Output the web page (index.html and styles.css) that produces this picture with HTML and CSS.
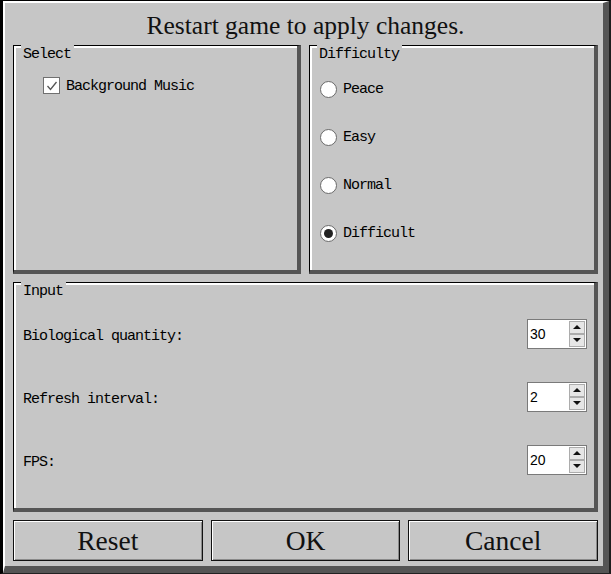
FILE: index.html
```html
<!DOCTYPE html>
<html>
<head>
<meta charset="utf-8">
<link rel="stylesheet" href="styles.css">
</head>
<body>
<div class="window">
  <div class="window-inner">
    <div class="title">Restart game to apply changes.</div>
    <div class="top-row">
      <div class="panel select-panel">
        <span class="panel-title">Select</span>
        <label class="check-row">
          <span class="checkbox">
            <svg width="14" height="14" viewBox="0 0 14 14"><polyline points="2.5,7 5.5,10.5 11.5,3" fill="none" stroke="#555" stroke-width="1.3"/></svg>
          </span>
          <span class="mono">Background Music</span>
        </label>
      </div>
      <div class="panel difficulty-panel">
        <span class="panel-title">Difficulty</span>
        <div class="radio-row"><span class="radio"></span><span class="mono">Peace</span></div>
        <div class="radio-row"><span class="radio"></span><span class="mono">Easy</span></div>
        <div class="radio-row"><span class="radio"></span><span class="mono">Normal</span></div>
        <div class="radio-row"><span class="radio checked"></span><span class="mono">Difficult</span></div>
      </div>
    </div>
    <div class="panel input-panel">
      <span class="panel-title">Input</span>
      <div class="input-row">
        <span class="mono row-label">Biological quantity:</span>
        <div class="spinner"><span class="spin-value">30</span><span class="spin-btns"><span class="spin-btn"><span class="tri-up"></span></span><span class="spin-btn"><span class="tri-down"></span></span></span></div>
      </div>
      <div class="input-row">
        <span class="mono row-label">Refresh interval:</span>
        <div class="spinner"><span class="spin-value">2</span><span class="spin-btns"><span class="spin-btn"><span class="tri-up"></span></span><span class="spin-btn"><span class="tri-down"></span></span></span></div>
      </div>
      <div class="input-row">
        <span class="mono row-label">FPS:</span>
        <div class="spinner"><span class="spin-value">20</span><span class="spin-btns"><span class="spin-btn"><span class="tri-up"></span></span><span class="spin-btn"><span class="tri-down"></span></span></span></div>
      </div>
    </div>
    <div class="button-row">
      <button class="btn">Reset</button>
      <button class="btn">OK</button>
      <button class="btn">Cancel</button>
    </div>
  </div>
</div>
</body>
</html>
```

FILE: styles.css
```css
html, body {
  margin: 0;
  padding: 0;
  background: #c6c6c6;
}
.window {
  width: 611px;
  height: 574px;
  box-sizing: border-box;
  border-style: solid;
  border-width: 1px 2px 1px 3px;
  border-color: #000 #1e1e1e #222 #000;
}
.window-inner {
  height: 100%;
  box-sizing: border-box;
  border-style: solid;
  border-width: 2px 6px 7px 2px;
  border-color: #fff #555 #555 #fff;
  padding: 0 5px 5px 8px;
  display: flex;
  flex-direction: column;
  gap: 8px;
  background: #c6c6c6;
}
.title {
  font-family: "Liberation Serif", serif;
  font-size: 25.5px;
  line-height: 40px;
  height: 42px;
  box-sizing: border-box;
  padding-top: 3px;
  text-align: center;
  color: #111;
  margin-bottom: -8px;
}
.top-row {
  display: grid;
  grid-template-columns: 288px 1fr;
  gap: 8px;
  height: 229px;
}
.panel {
  position: relative;
  box-sizing: border-box;
  border-style: solid;
  border-width: 1px 4px 4px 1px;
  border-color: #000 #555 #555 #000;
  box-shadow: inset 2px 2px 0 #fff;
}
.panel-title {
  position: absolute;
  top: -1px;
  left: 7px;
  padding: 2px 3px 0 2px;
  background: #c6c6c6;
  font-family: "Liberation Mono", monospace;
  font-size: 15px;
  letter-spacing: -1px;
  line-height: 16px;
  height: 16px;
  color: #000;
}
.mono {
  font-family: "Liberation Mono", monospace;
  font-size: 15px;
  letter-spacing: -1px;
  color: #000;
  white-space: pre;
}
.select-panel {
  padding: 31px 0 0 29px;
}
.check-row {
  display: flex;
  align-items: center;
  gap: 6px;
  height: 17px;
}
.checkbox {
  width: 17px;
  height: 17px;
  box-sizing: border-box;
  border: 1px solid #707070;
  background: #fff;
  display: flex;
  align-items: center;
  justify-content: center;
}
.check-row .mono {
  padding-top: 1px;
}
.difficulty-panel {
  padding: 19px 0 0 10px;
}
.radio-row {
  height: 48px;
  display: flex;
  align-items: center;
  gap: 6px;
}
.radio {
  width: 17px;
  height: 17px;
  box-sizing: border-box;
  border-radius: 50%;
  border: 1px solid #6a6a6a;
  background: #fff;
  display: flex;
  align-items: center;
  justify-content: center;
}
.radio.checked::after {
  content: "";
  width: 9px;
  height: 9px;
  border-radius: 50%;
  background: #222;
}
.input-panel {
  height: 230px;
  padding: 20px 7px 0 9px;
}
.input-row {
  height: 63px;
  display: flex;
  align-items: center;
  justify-content: space-between;
}
.row-label {
  padding-top: 3px;
}
.spinner {
  width: 60px;
  height: 30px;
  box-sizing: border-box;
  border: 1px solid #7a7a7a;
  background: #fff;
  display: flex;
  margin-top: -2px;
}
.spin-value {
  flex: 1;
  padding-left: 2px;
  font-family: "Liberation Sans", Arial, sans-serif;
  font-size: 14px;
  line-height: 28px;
  color: #000;
}
.spin-btns {
  width: 16px;
  display: flex;
  flex-direction: column;
  padding: 1px 1px 1px 0;
}
.spin-btn {
  flex: 1;
  box-sizing: border-box;
  border: 1px solid #acacac;
  background: #e6e6e6;
  display: flex;
  align-items: center;
  justify-content: center;
}
.tri-up {
  width: 0;
  height: 0;
  border-left: 4px solid transparent;
  border-right: 4px solid transparent;
  border-bottom: 4px solid #111;
}
.tri-down {
  width: 0;
  height: 0;
  border-left: 4px solid transparent;
  border-right: 4px solid transparent;
  border-top: 4px solid #111;
}
.button-row {
  display: grid;
  grid-template-columns: 1fr 1fr 1fr;
  gap: 8px;
  height: 41px;
}
.btn {
  margin: 0;
  padding: 0;
  height: 41px;
  box-sizing: border-box;
  border: 1px solid #111;
  background: #c6c6c6;
  box-shadow: inset 1px 1px 0 #fff, inset -1px -1px 0 #8a8a8a;
  font-family: "Liberation Serif", serif;
  font-size: 27.5px;
  line-height: 40px;
  color: #111;
  text-align: center;
}
```
